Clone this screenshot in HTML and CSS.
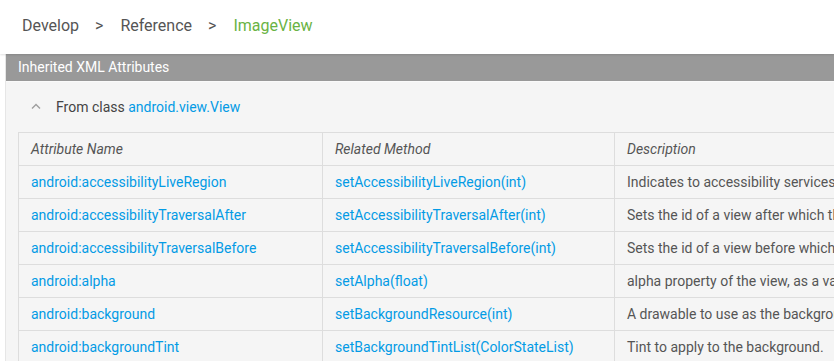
FILE: index.html
```
<!DOCTYPE html>
<html lang="en">

<head>
  <meta charset="UTF-8">
  <meta name="viewport" content="width=device-width, initial-scale=1.0">
  <title>ImageView | Android Developers</title>
  <link rel="stylesheet" href="styles.css">
</head>

<body>

  <div class="crumbs">
    <a href="#" class="crumb">Develop</a>
    <span class="sep">&gt;</span>
    <a href="#" class="crumb">Reference</a>
    <span class="sep">&gt;</span>
    <a href="#" class="crumb current">ImageView</a>
  </div>

  <div class="panel">
    <div class="panel-title">Inherited XML Attributes</div>

    <div class="inherit-head">
      <svg class="chevron" width="10" height="6" viewBox="0 0 10 6">
        <path d="M1 5.5 L5 1.5 L9 5.5" fill="none" stroke="#9e9e9e" stroke-width="1.4" />
      </svg>
      <span>From class <a href="#">android.view.View</a></span>
    </div>

    <table class="attrs">
      <tr>
        <th class="col-name">Attribute Name</th>
        <th class="col-method">Related Method</th>
        <th>Description</th>
      </tr>
      <tr>
        <td><a href="#">android:accessibilityLiveRegion</a></td>
        <td><a href="#">setAccessibilityLiveRegion(int)</a></td>
        <td>Indicates to accessibility services whether the user should be notified when this view changes.</td>
      </tr>
      <tr>
        <td><a href="#">android:accessibilityTraversalAfter</a></td>
        <td><a href="#">setAccessibilityTraversalAfter(int)</a></td>
        <td>Sets the id of a view after which this one is visited in accessibility traversal.</td>
      </tr>
      <tr>
        <td><a href="#">android:accessibilityTraversalBefore</a></td>
        <td><a href="#">setAccessibilityTraversalBefore(int)</a></td>
        <td>Sets the id of a view before which this one is visited in accessibility traversal.</td>
      </tr>
      <tr>
        <td><a href="#">android:alpha</a></td>
        <td><a href="#">setAlpha(float)</a></td>
        <td>alpha property of the view, as a value between 0 (completely transparent) and 1 (completely opaque).</td>
      </tr>
      <tr>
        <td><a href="#">android:background</a></td>
        <td><a href="#">setBackgroundResource(int)</a></td>
        <td>A drawable to use as the background.</td>
      </tr>
      <tr>
        <td><a href="#">android:backgroundTint</a></td>
        <td><a href="#">setBackgroundTintList(ColorStateList)</a></td>
        <td>Tint to apply to the background.</td>
      </tr>
      <tr>
        <td><a href="#">android:backgroundTintMode</a></td>
        <td><a href="#">setBackgroundTintMode(PorterDuff.Mode)</a></td>
        <td>Blending mode used to apply the background tint.</td>
      </tr>
    </table>
  </div>

</body>

</html>
```

FILE: styles.css
```
body {
  font-family: Roboto, "Noto Sans", Arial, sans-serif;
  margin: 0;
  padding: 0;
  background-color: #fff;
  color: #555;
  overflow: hidden;
}

a {
  color: #039be5;
  text-decoration: none;
}

.crumbs {
  display: flex;
  align-items: center;
  height: 54px;
  padding-left: 22px;
  font-size: 16px;
  background-color: #fff;
  position: relative;
  z-index: 1;
  box-shadow: 0 1px 2px rgba(0, 0, 0, 0.12);
}

.crumb {
  color: #555;
  margin-top: -4px;
}

.crumb.current {
  color: #6ab344;
}

.sep {
  color: #555;
  margin: -4px 17px 0 16px;
}

.panel {
  margin-left: 5px;
  border-left: 1px solid #e6e6e6;
  background-color: #f5f5f5;
  height: 320px;
  overflow: hidden;
}

.panel-title {
  background-color: #999;
  color: #fff;
  font-size: 14px;
  height: 27px;
  line-height: 26px;
  padding-left: 12px;
  border-bottom: 1px solid #fafafa;
}

.inherit-head {
  display: flex;
  align-items: center;
  height: 50px;
  padding-left: 25px;
  font-size: 14px;
  color: #444;
}

.chevron {
  margin-right: 15px;
  margin-top: -3px;
}

.attrs {
  margin-left: 12px;
  width: 1100px;
  border-collapse: collapse;
  font-size: 14px;
  table-layout: fixed;
}

.attrs th,
.attrs td {
  border: 1px solid #ddd;
  padding: 6px 12px;
  line-height: 20px;
  text-align: left;
  white-space: nowrap;
  overflow: hidden;
}

.attrs th {
  font-weight: normal;
  font-style: italic;
  color: #555;
}

.col-name {
  width: 279px;
}

.col-method {
  width: 267px;
}
```
